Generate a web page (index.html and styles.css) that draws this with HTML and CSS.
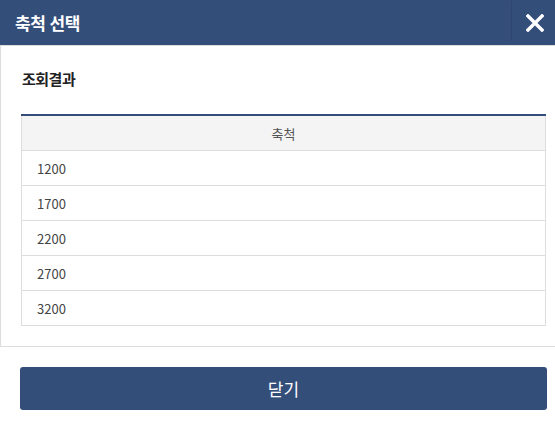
FILE: index.html
```html
<!DOCTYPE html>
<html lang="ko">
<head>
    <meta charset="UTF-8">
    <meta name="viewport" content="width=device-width, initial-scale=1.0">
    <title>축척 선택</title>
    <link rel="stylesheet" href="styles.css">
</head>
<body>
    <div class="popup">
        <div class="popup-header">
            <h1 class="popup-title">축척 선택</h1>
            <button class="close-btn" type="button" aria-label="닫기">
                <svg width="18" height="18" viewBox="0 0 18 18">
                    <path d="M2 2 L16 16 M16 2 L2 16" stroke="#fff" stroke-width="3.4" stroke-linecap="square"/>
                </svg>
            </button>
        </div>
        <div class="popup-body">
            <h2 class="section-title">조회결과</h2>
            <table class="result-table">
                <thead>
                    <tr><th>축척</th></tr>
                </thead>
                <tbody>
                    <tr><td>1200</td></tr>
                    <tr><td>1700</td></tr>
                    <tr><td>2200</td></tr>
                    <tr><td>2700</td></tr>
                    <tr><td>3200</td></tr>
                </tbody>
            </table>
        </div>
        <div class="popup-footer">
            <button class="confirm-btn" type="button">닫기</button>
        </div>
    </div>
</body>
</html>
```

FILE: styles.css
```css
:root {
    --navy: #344e7a;
    --line: #dddddd;
}
body {
    margin: 0;
    font-family: "Noto Sans CJK KR", "Noto Sans", sans-serif;
    color: #333;
    background-color: #fff;
}
.popup {
    width: 555px;
}
.popup-header {
    height: 45px;
    background-color: var(--navy);
    display: flex;
    align-items: center;
    justify-content: space-between;
}
.popup-title {
    margin: 0 0 0 15px;
    font-size: 17px;
    font-weight: bold;
    color: #fff;
    line-height: 1;
    letter-spacing: -0.5px;
}
.close-btn {
    width: 44px;
    height: 40px;
    margin-top: -4px;
    border: none;
    border-left: 1px solid #2d4570;
    background: transparent;
    display: flex;
    align-items: center;
    justify-content: center;
    padding: 0 0 0 2px;
    cursor: pointer;
}
.close-btn svg {
    margin-top: 4px;
}
.popup-body {
    border: 1px solid var(--line);
    border-right: none;
    padding: 20px 8px 20px 20px;
    height: 260px;
}
.section-title {
    margin: 0 0 0 1px;
    font-size: 15px;
    font-weight: bold;
    color: #222;
    line-height: 26px;
    letter-spacing: -0.5px;
}
.result-table {
    width: 525px;
    margin-top: 22px;
    border-collapse: collapse;
    border-top: 2px solid var(--navy);
    font-size: 13px;
}
.result-table th {
    height: 34px;
    padding: 0;
    background-color: #f4f4f4;
    border: 1px solid var(--line);
    border-top: none;
    font-weight: normal;
    color: #555;
    text-align: center;
}
.result-table td {
    height: 34px;
    padding: 0 0 0 15px;
    border: 1px solid var(--line);
    color: #444;
}
.popup-footer {
    padding: 20px 8px 0 20px;
}
.confirm-btn {
    width: 527px;
    height: 43px;
    border: none;
    border-radius: 3px;
    background-color: var(--navy);
    color: #fff;
    font-family: inherit;
    font-size: 17px;
    cursor: pointer;
}
```
